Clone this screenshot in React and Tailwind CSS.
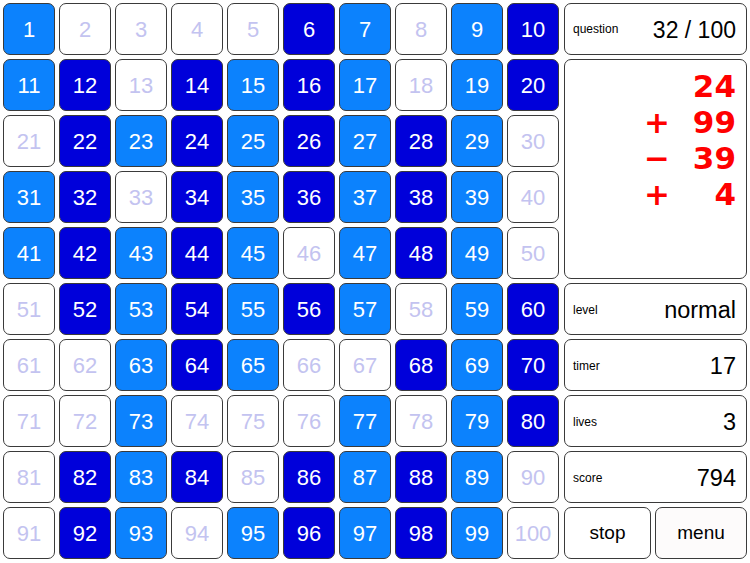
import React from 'react';

const L = 'L', D = 'D', W = 'W';
const layout = [
  [L, W, W, W, W, D, L, W, L, D],
  [L, D, W, D, L, D, L, W, L, D],
  [W, D, L, D, L, D, L, D, L, W],
  [L, D, W, D, L, D, L, D, L, W],
  [L, D, L, D, L, W, L, D, L, W],
  [W, D, L, D, L, D, L, W, L, D],
  [W, W, L, D, L, W, W, D, L, D],
  [W, W, L, W, W, W, L, W, L, D],
  [W, D, L, D, W, D, L, D, L, W],
  [W, D, L, W, L, D, L, D, L, W],
];

const cellStyle = {
  L: 'bg-[#0c82fd] text-white',
  D: 'bg-[#0000da] text-white',
  W: 'bg-white text-[#c3c3f0]',
};

const stats = [
  { label: 'level', value: 'normal' },
  { label: 'timer', value: '17' },
  { label: 'lives', value: '3' },
  { label: 'score', value: '794' },
];

const expr = [
  { op: '', n: '24' },
  { op: '+', n: '99' },
  { op: '−', n: '39' },
  { op: '+', n: '4' },
];

const box = 'rounded-[7px] border border-[#3a3a3a]';

export default function App() {
  return (
    <div className="w-[750px] h-[563px] bg-white flex gap-[5px] p-[3px] font-['Liberation_Sans',Arial,sans-serif]">
      <div className="grid grid-cols-[repeat(10,52px)] grid-rows-[repeat(10,52px)] gap-[4px]">
        {layout.flatMap((row, r) =>
          row.map((c, i) => (
            <div
              key={r * 10 + i}
              className={`${box} ${cellStyle[c]} flex items-center justify-center text-[22px]`}
            >
              {r * 10 + i + 1}
            </div>
          ))
        )}
      </div>

      <div className="w-[183px] grid grid-rows-[repeat(10,52px)] gap-[4px]">
        <div className={`${box} bg-white flex items-center justify-between pl-[8px] pr-[10px]`}>
          <span className="text-[12px] text-black">question</span>
          <span className="text-[23px] text-black mt-[2px]">32 / 100</span>
        </div>

        <div className={`${box} bg-white row-span-4 pt-[8px] pr-[10px] font-['DejaVu_Sans',sans-serif] font-bold text-[#ff0000] text-[31px]`}>
          {expr.map((e, i) => (
            <div key={i} className="flex justify-end items-center h-[36px] leading-none">
              <span className="w-[20px] text-center">{e.op}</span>
              <span className="w-[72px] text-right">{e.n}</span>
            </div>
          ))}
        </div>

        {stats.map((s) => (
          <div key={s.label} className={`${box} bg-white flex items-center justify-between pl-[8px] pr-[10px]`}>
            <span className="text-[12px] text-black mt-[1px]">{s.label}</span>
            <span className="text-[23.5px] text-black mt-[3px]">{s.value}</span>
          </div>
        ))}

        <div className="grid grid-cols-[87px_1fr] gap-[4px]">
          <div className={`${box} bg-white flex items-center justify-center text-[19px] text-black`}>stop</div>
          <div className={`${box} bg-[#fdfbfb] flex items-center justify-center text-[19px] text-black`}>menu</div>
        </div>
      </div>
    </div>
  );
}
